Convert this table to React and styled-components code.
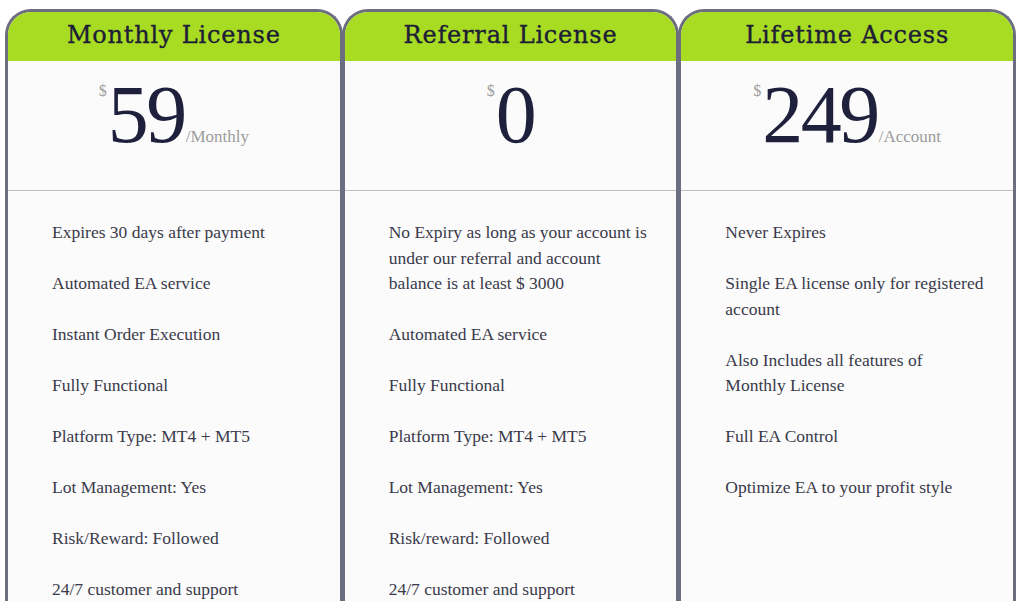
import React from "react";
import styled, { createGlobalStyle } from "styled-components";

const Global = createGlobalStyle`
  html, body { margin: 0; padding: 0; background: #ffffff; }
  body { overflow: hidden; }
`;

const Row = styled.div`
  display: flex;
  align-items: flex-start;
  padding: 9px 4px 0 5px;
  height: 601px;
  box-sizing: border-box;
  overflow: hidden;
`;

const Card = styled.section`
  flex: 1 1 0;
  min-width: 0;
  height: 700px;
  box-sizing: border-box;
  border: 3px solid #6d6d80;
  border-bottom: none;
  border-radius: 26px 26px 0 0;
  overflow: hidden;
  background: #fbfbfb;
  & + & { margin-left: -1px; }
`;

const Header = styled.h2`
  margin: 0;
  height: 49px;
  padding-bottom: 3px;
  box-sizing: border-box;
  display: flex;
  align-items: center;
  justify-content: center;
  background: #a8dc22;
  color: #1d1d36;
  font-family: "DejaVu Serif", serif;
  font-weight: 400;
  font-size: 24px;
  letter-spacing: 0.8px;
  -webkit-text-stroke: 0.35px #1d1d36;
`;

const PriceBox = styled.div`
  height: 130px;
  box-sizing: border-box;
  padding-top: 13px;
  text-align: center;
  border-bottom: 1px solid #bdbdbd;
  font-family: "Liberation Serif", serif;
  white-space: nowrap;
`;

const Currency = styled.span`
  display: inline-block;
  vertical-align: top;
  margin-top: 9px;
  font-size: 16px;
  line-height: 16px;
  color: #9c9c9c;
  margin-right: 1px;
`;

const Amount = styled.span`
  font-size: 82px;
  line-height: 82px;
  color: #1e203c;
  letter-spacing: -2.5px;
`;

const Period = styled.span`
  font-size: 17px;
  color: #9c9c9c;
  margin-left: 1px;
`;

const Features = styled.ul`
  list-style: none;
  margin: 0;
  padding: 29px 28px 0 44px;
  display: flex;
  flex-direction: column;
  gap: 25.5px;
`;

const Feature = styled.li`
  font-family: "Liberation Serif", serif;
  font-size: 17.5px;
  line-height: 25.5px;
  color: #3a3a4a;
`;

const plans = [
  {
    title: "Monthly License",
    amount: "59",
    period: "/Monthly",
    features: [
      "Expires 30 days after payment",
      "Automated EA service",
      "Instant Order Execution",
      "Fully Functional",
      "Platform Type: MT4 + MT5",
      "Lot Management: Yes",
      "Risk/Reward: Followed",
      "24/7 customer and support",
    ],
  },
  {
    title: "Referral License",
    amount: "0",
    period: "",
    features: [
      "No Expiry as long as your account is under our referral and account balance is at least $ 3000",
      "Automated EA service",
      "Fully Functional",
      "Platform Type: MT4 + MT5",
      "Lot Management: Yes",
      "Risk/reward: Followed",
      "24/7 customer and support",
    ],
  },
  {
    title: "Lifetime Access",
    amount: "249",
    period: "/Account",
    features: [
      "Never Expires",
      "Single EA license only for registered account",
      "Also Includes all features of Monthly License",
      "Full EA Control",
      "Optimize EA to your profit style",
    ],
  },
];

export default function App() {
  return (
    <>
      <Global />
      <Row>
        {plans.map((p) => (
          <Card key={p.title}>
            <Header>{p.title}</Header>
            <PriceBox>
              <Currency>$</Currency>
              <Amount>{p.amount}</Amount>
              {p.period && <Period>{p.period}</Period>}
            </PriceBox>
            <Features>
              {p.features.map((f) => (
                <Feature key={f}>{f}</Feature>
              ))}
            </Features>
          </Card>
        ))}
      </Row>
    </>
  );
}
